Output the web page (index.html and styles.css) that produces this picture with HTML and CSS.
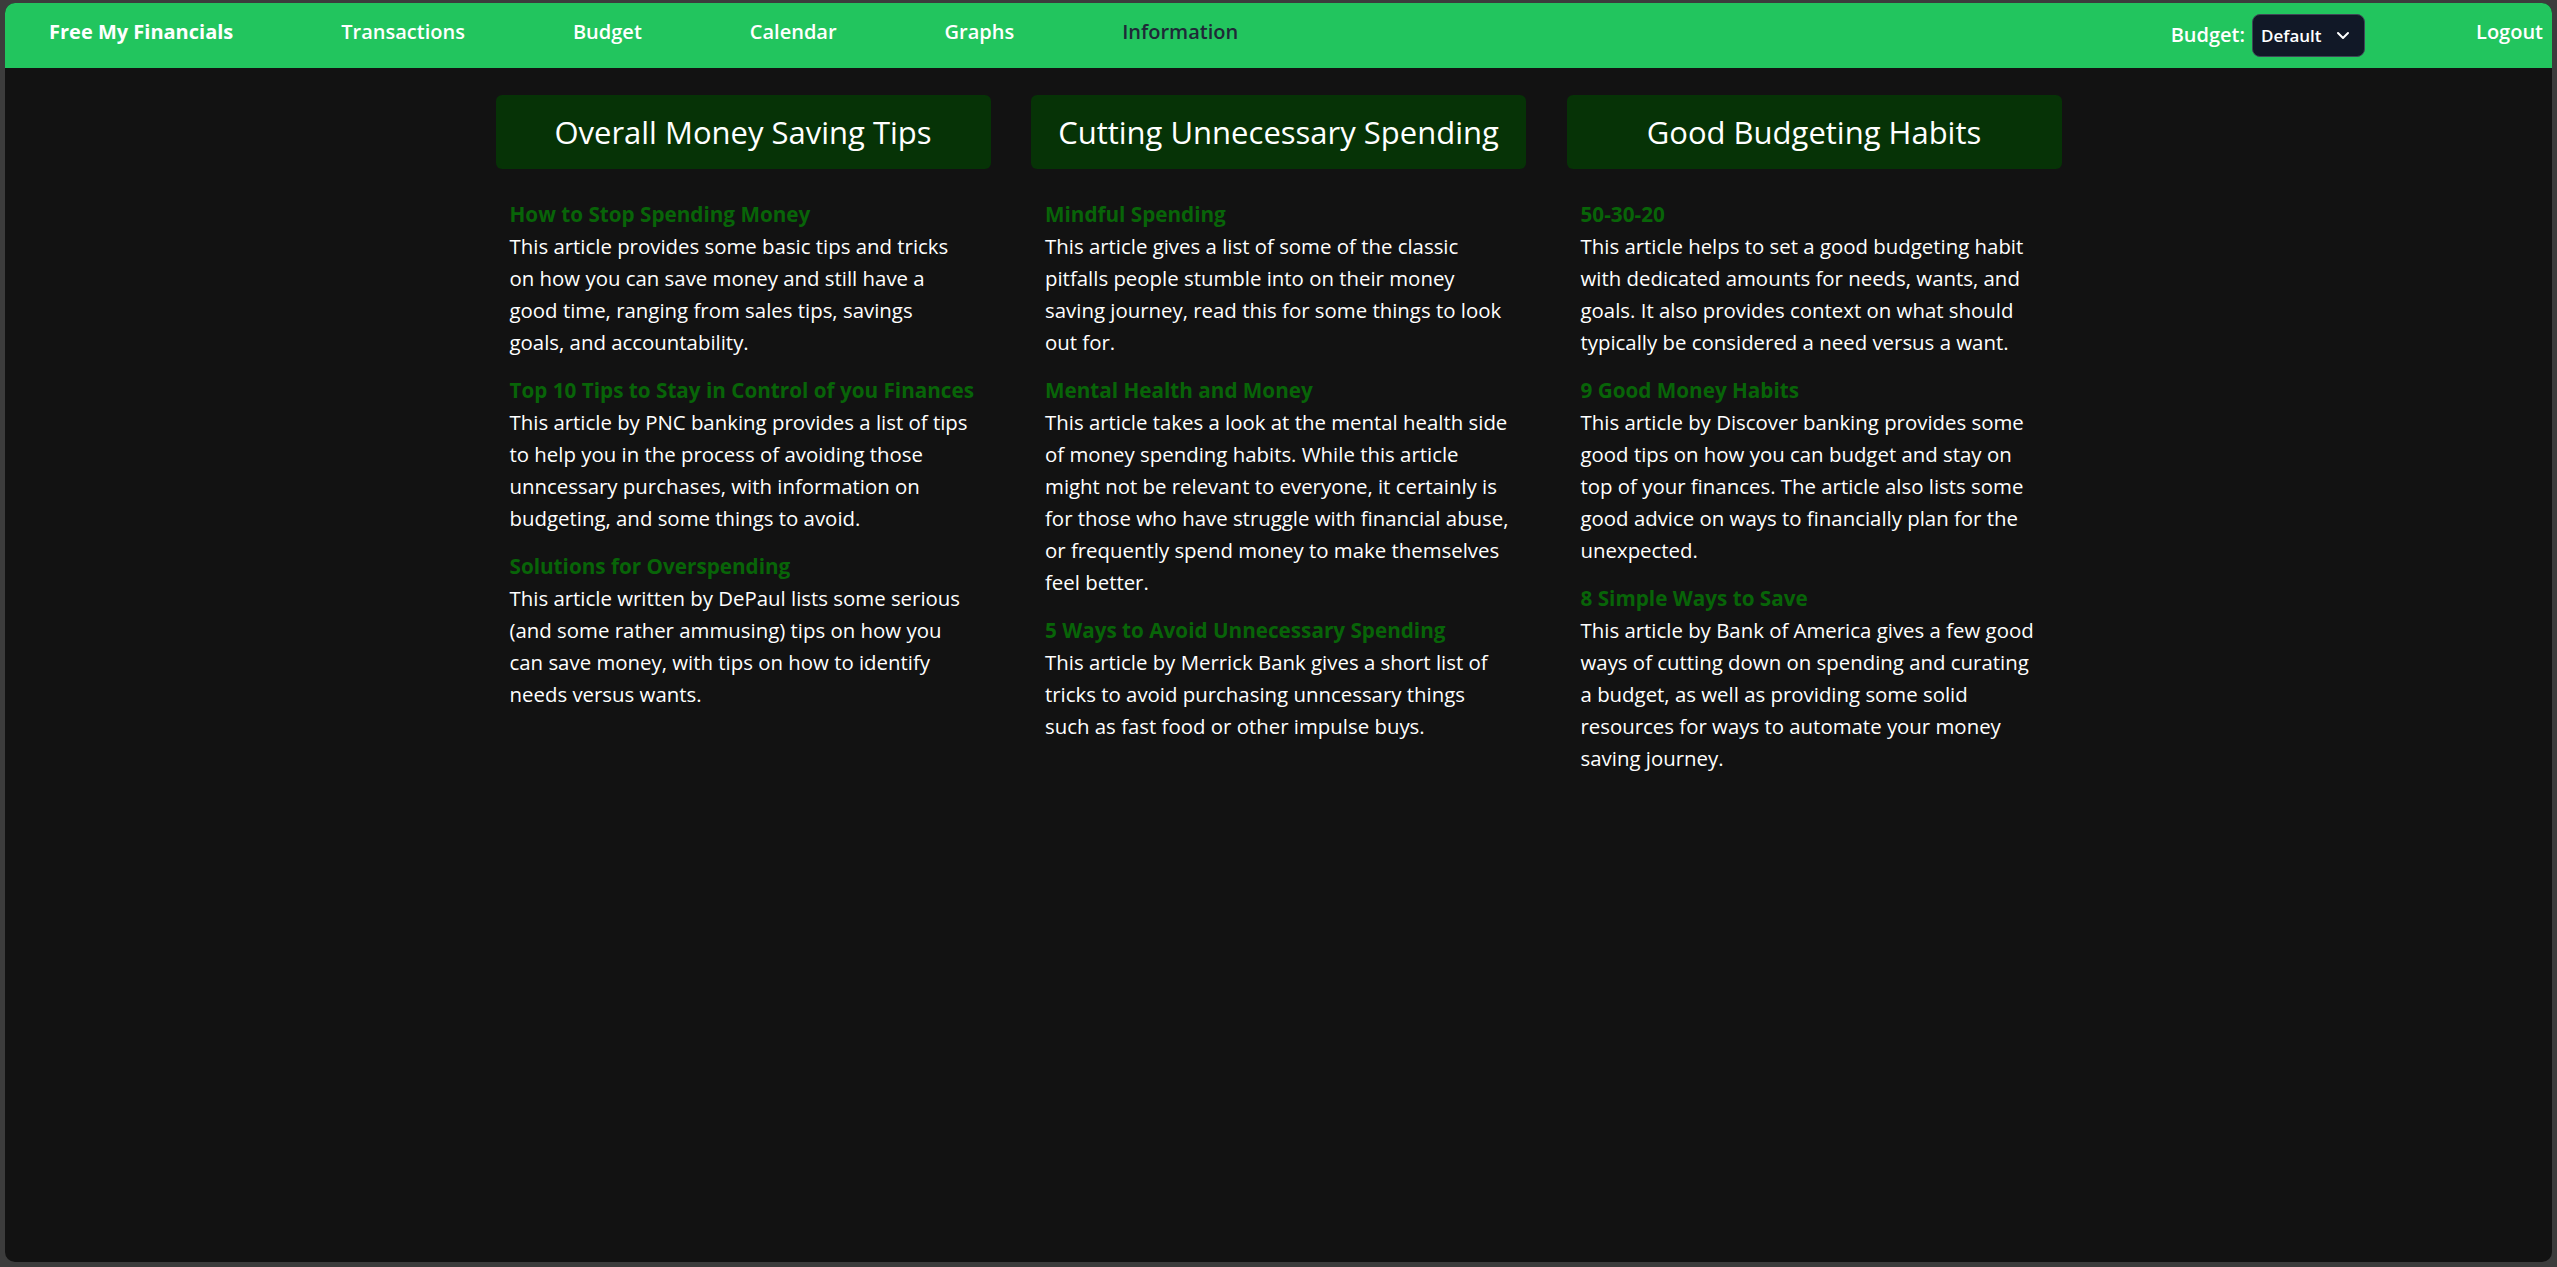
FILE: index.html
```html
<!DOCTYPE html>
<html>
  <head>
    <meta charset="UTF-8" />
    <title>Free My Financials - Information</title>
    <link rel="stylesheet" href="styles.css">
  </head>
  <body>
    <div class="app">
      <!-- top navigation -->
      <nav class="navbar">
        <div class="nav-left">
          <a class="brand" href="#">Free My Financials</a>
          <a class="nav-link" href="#">Transactions</a>
          <a class="nav-link" href="#">Budget</a>
          <a class="nav-link" href="#">Calendar</a>
          <a class="nav-link" href="#">Graphs</a>
          <a class="nav-link active" href="#">Information</a>
        </div>
        <div class="nav-right">
          <div class="budget-pick">
            <span class="nav-label">Budget:</span>
            <div class="select">
              <span>Default</span>
              <svg width="14" height="9" viewBox="0 0 14 9"><polyline points="2,2 7,7 12,2" fill="none" stroke="#fff" stroke-width="2" stroke-linecap="round" stroke-linejoin="round"/></svg>
            </div>
          </div>
          <a class="nav-link" href="#">Logout</a>
        </div>
      </nav>

      <!-- info columns -->
      <div class="columns">
        <div class="column">
          <h2 class="column-title">Overall Money Saving Tips</h2>
          <div class="articles">
            <div class="article">
              <a class="article-title" href="#">How to Stop Spending Money</a>
              <p>This article provides some basic tips and tricks<br>on how you can save money and still have a<br>good time, ranging from sales tips, savings<br>goals, and accountability.</p>
            </div>
            <div class="article">
              <a class="article-title" href="#">Top 10 Tips to Stay in Control of you Finances</a>
              <p>This article by PNC banking provides a list of tips<br>to help you in the process of avoiding those<br>unncessary purchases, with information on<br>budgeting, and some things to avoid.</p>
            </div>
            <div class="article">
              <a class="article-title" href="#">Solutions for Overspending</a>
              <p>This article written by DePaul lists some serious<br>(and some rather ammusing) tips on how you<br>can save money, with tips on how to identify<br>needs versus wants.</p>
            </div>
          </div>
        </div>

        <div class="column">
          <h2 class="column-title">Cutting Unnecessary Spending</h2>
          <div class="articles">
            <div class="article">
              <a class="article-title" href="#">Mindful Spending</a>
              <p>This article gives a list of some of the classic<br>pitfalls people stumble into on their money<br>saving journey, read this for some things to look<br>out for.</p>
            </div>
            <div class="article">
              <a class="article-title" href="#">Mental Health and Money</a>
              <p>This article takes a look at the mental health side<br>of money spending habits. While this article<br>might not be relevant to everyone, it certainly is<br>for those who have struggle with financial abuse,<br>or frequently spend money to make themselves<br>feel better.</p>
            </div>
            <div class="article">
              <a class="article-title" href="#">5 Ways to Avoid Unnecessary Spending</a>
              <p>This article by Merrick Bank gives a short list of<br>tricks to avoid purchasing unncessary things<br>such as fast food or other impulse buys.</p>
            </div>
          </div>
        </div>

        <div class="column">
          <h2 class="column-title">Good Budgeting Habits</h2>
          <div class="articles">
            <div class="article">
              <a class="article-title" href="#">50-30-20</a>
              <p>This article helps to set a good budgeting habit<br>with dedicated amounts for needs, wants, and<br>goals. It also provides context on what should<br>typically be considered a need versus a want.</p>
            </div>
            <div class="article">
              <a class="article-title" href="#">9 Good Money Habits</a>
              <p>This article by Discover banking provides some<br>good tips on how you can budget and stay on<br>top of your finances. The article also lists some<br>good advice on ways to financially plan for the<br>unexpected.</p>
            </div>
            <div class="article">
              <a class="article-title" href="#">8 Simple Ways to Save</a>
              <p>This article by Bank of America gives a few good<br>ways of cutting down on spending and curating<br>a budget, as well as providing some solid<br>resources for ways to automate your money<br>saving journey.</p>
            </div>
          </div>
        </div>
      </div>
    </div>
  </body>
</html>
```

FILE: styles.css
```css
html, body {
  height: 100%;
}
body {
  margin: 0;
  padding: 3px 5px 5px 5px;
  box-sizing: border-box;
  background-color: #3c3c3c;
  font-family: "Open Sans", "Noto Sans", sans-serif;
  color: #fff;
}

/* window area */
.app {
  height: 100%;
  background-color: #121212;
  border-radius: 10px;
  overflow: hidden;
}

/* Top bar */
.navbar {
  height: 65px;
  background-color: #22c55e;
  display: flex;
  align-items: center;
  justify-content: space-between;
  padding: 0 9px 0 44px;
}
.nav-left {
  display: flex;
  align-items: center;
  gap: 108px;
}
.nav-right {
  display: flex;
  align-items: center;
  gap: 111px;
}
.navbar a {
  color: #fff;
  text-decoration: none;
  font-size: 20px;
  padding-bottom: 9px;
}
.brand {
  font-weight: 700;
}
.nav-link {
  font-weight: 600;
}
.nav-link.active {
  color: #1f2937;
  font-weight: 600;
}
.budget-pick {
  display: flex;
  align-items: center;
  gap: 7px;
}
.nav-label {
  font-size: 20px;
  font-weight: 600;
  padding-bottom: 2px;
}
.select {
  width: 113px;
  height: 43px;
  box-sizing: border-box;
  background-color: #111827;
  border: 1px solid #3f4756;
  border-radius: 8px;
  display: flex;
  align-items: center;
  justify-content: space-between;
  padding: 0 14px 0 8px;
  font-size: 17px;
  font-weight: 600;
}

/* The three info columns */
.columns {
  width: 1566px;
  margin: 27px auto 0;
  display: grid;
  grid-template-columns: repeat(3, 495px);
  column-gap: 40.5px;
}
.column-title {
  margin: 0;
  height: 74px;
  display: flex;
  align-items: center;
  justify-content: center;
  background-color: #063306;
  border-radius: 6px;
  font-size: 31px;
  font-weight: 400;
}
.articles {
  margin-top: 29px;
  padding: 0 14px;
}
.article {
  margin-bottom: 16px;
  font-size: 20.4px;
  line-height: 32px;
}
.article-title {
  display: block;
  color: #086408;
  font-weight: 700;
  font-size: 20.7px;
  text-decoration: none;
}
.article p {
  margin: 0;
  white-space: nowrap;
}
```
